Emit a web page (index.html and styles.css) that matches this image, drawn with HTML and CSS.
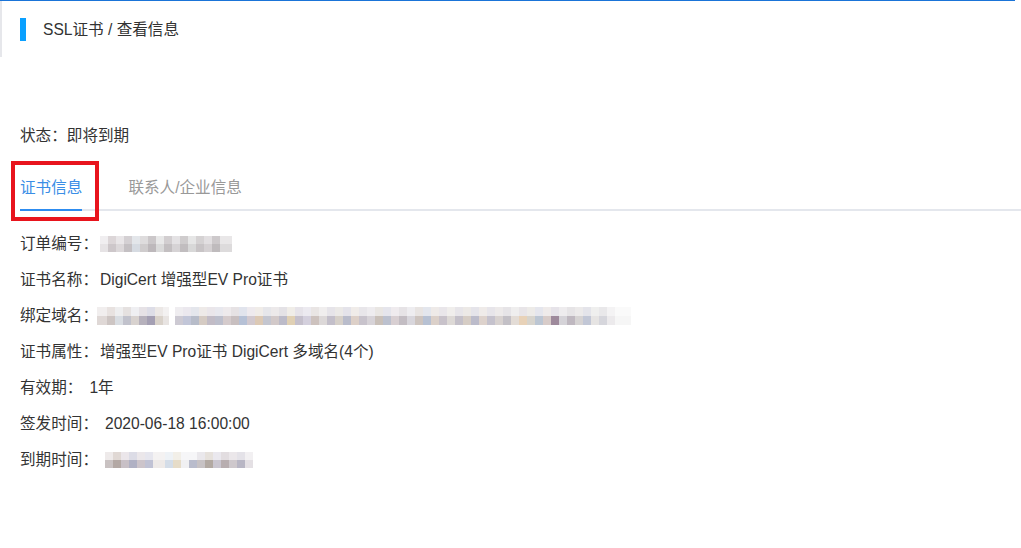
FILE: index.html
```html
<!DOCTYPE html>
<html lang="zh-CN">
<head>
<meta charset="utf-8">
<title>SSL证书 / 查看信息</title>
<link rel="stylesheet" href="styles.css">
</head>
<body>
<div class="topline"></div>
<header class="header">
  <span class="bar"></span>
  <span class="crumb">SSL证书 / 查看信息</span>
</header>
<main class="content">
  <div class="status">状态：即将到期</div>
  <nav class="tabs">
    <div class="tab active">证书信息<span class="highlight"></span></div>
    <div class="tab">联系人/企业信息</div>
  </nav>
  <ul class="info">
    <li><span class="label">订单编号：</span><span class="blur blur-order"></span></li>
    <li><span class="label">证书名称：</span><span class="value">DigiCert 增强型EV Pro证书</span></li>
    <li><span class="label">绑定域名：</span><span class="blur blur-domain"></span></li>
    <li><span class="label">证书属性：</span><span class="value">增强型EV Pro证书 DigiCert 多域名(4个)</span></li>
    <li><span class="label">有效期：</span><span class="value gap">1年</span></li>
    <li><span class="label">签发时间：</span><span class="value gap">2020-06-18 16:00:00</span></li>
    <li><span class="label">到期时间：</span><span class="blur blur-expire"></span></li>
  </ul>
</main>
</body>
</html>
```

FILE: styles.css
```css
html, body {
  margin: 0;
  padding: 0;
  background: #fff;
}
body {
  font-family: "Liberation Sans", "Noto Sans CJK SC", sans-serif;
  font-size: 15.6px;
  color: #333;
}
.topline {
  height: 1px;
  width: 1015px;
  background: #1a74d8;
}
.header {
  height: 56px;
  border-left: 2px solid #e6e7eb;
  display: flex;
  align-items: center;
  padding-left: 18px;
}
.bar {
  width: 6px;
  height: 23px;
  background: #0aa0ff;
  margin-right: 17px;
}
.crumb {
  line-height: 20px;
  color: #333;
  padding-top: 1px;
}
.content {
  padding-left: 20px;
}
.status {
  margin-top: 69px;
  line-height: 20px;
}
.tabs {
  margin-top: 20px;
  display: flex;
  border-bottom: 2px solid #e4e7ed;
}
.tab {
  position: relative;
  padding: 12px 0 11px;
  line-height: 20px;
  margin-bottom: -2px;
  border-bottom: 2px solid transparent;
  color: #999;
}
.tab + .tab {
  margin-left: 46px;
}
.tab.active {
  color: #3a8ee6;
  border-bottom-color: #2d8cf0;
}
.highlight {
  position: absolute;
  left: -9px;
  top: -5px;
  width: 88px;
  height: 60px;
  box-sizing: border-box;
  border: 4px solid #e8141d;
}
.info {
  list-style: none;
  margin: 15px 0 0;
  padding: 0;
}
.info li {
  display: flex;
  align-items: center;
  padding: 8px 0;
  line-height: 20px;
  height: 20px;
}
.label {
  color: #333;
}
.value {
  margin-left: 2px;
}
.value.gap {
  margin-left: 7px;
}
.blur {
  display: inline-block;
  filter: blur(0.6px);
  background-repeat: no-repeat;
}
.blur-order {
  width: 132px;
  height: 16px;
  margin-left: 2px;
  background-image:
    linear-gradient(to right, #f0eef0 0 8px, #dcd6d8 8px 16px, #e9e6e8 16px 24px, #d4d0d3 24px 32px, #e3e6ea 32px 40px, #dedcdd 40px 48px, #cbc7c9 48px 56px, #e8e8e8 56px 64px, #d2ced0 64px 72px, #e4e2e4 72px 80px, #cfcccd 80px 88px, #e6e6e6 88px 96px, #d5d2d3 96px 104px, #e2dfe1 104px 112px, #cdc9cb 112px 120px, #e9e7e8 120px 132px),
    linear-gradient(to right, #e6e3e5 0 8px, #cdc7ca 8px 16px, #dcd8da 16px 24px, #c4c0c3 24px 32px, #d6dbe2 32px 40px, #cfcccd 40px 48px, #bdb8bb 48px 56px, #dadada 56px 64px, #c3bfc1 64px 72px, #d6d3d5 72px 80px, #c1bdbf 80px 88px, #d8d8d8 88px 96px, #c8c4c6 96px 104px, #d5d1d3 104px 112px, #bfbbbd 112px 120px, #dddbdc 120px 132px);
  background-size: 132px 8px, 132px 8px;
  background-position: 0 0, 0 8px;
}
.blur-domain {
  width: 534px;
  height: 18px;
  margin-left: -1px;
  background-image:
    linear-gradient(to right, #f1eeee 0 10px, #e8e2e0 10px 18px, #eeeeef 18px 26px, #e5e1e0 26px 34px, #efeff2 34px 42px, #e6e2e6 42px 50px, #dddde7 50px 58px, #ece8e6 58px 66px, #f3f1f1 66px 72px, #fff 72px 78px, #efedf0 78px 86px, #ebe8ee 86px 94px, #e4e6ec 94px 102px, #eeeae8 102px 110px, #eae6ea 110px 118px, #e8e8ee 118px 126px, #eeeaec 126px 134px, #e6e2e4 134px 142px, #e1e4ed 142px 150px, #eeeaee 150px 158px, #f0ece8 158px 166px, #e6e6ea 166px 174px, #ece9ea 174px 182px, #e4e2e6 182px 190px, #f0ede8 190px 198px, #e6e3e9 198px 206px, #eceaf0 206px 214px, #e9e5e4 214px 222px, #f0eeee 222px 230px, #e6e4e9 230px 238px, #ebe9e7 238px 246px, #e4e3ea 246px 254px, #f0ece9 254px 262px, #e8e6ea 262px 270px, #eeecef 270px 278px, #e9e6e3 278px 286px, #e5e5ec 286px 294px, #efebee 294px 302px, #e6e3e6 302px 310px, #eeedf0 310px 318px, #e8e4e2 318px 326px, #e3e6ed 326px 334px, #eeeae8 334px 342px, #e9e6ea 342px 350px, #f0eeec 350px 358px, #e7e5e9 358px 366px, #ece9e6 366px 374px, #e5e4ea 374px 382px, #efebe9 382px 390px, #e7e5ea 390px 398px, #edeaea 398px 406px, #e6e4e7 406px 414px, #efeeee 414px 422px, #e8e5e8 422px 430px, #edebe8 430px 438px, #e5e6ed 438px 446px, #efebea 446px 454px, #e6e3e9 454px 462px, #eeecee 462px 470px, #e6e4e6 470px 478px, #eceaea 478px 486px, #e4e4ea 486px 494px, #efefee 494px 502px, #e9e8ea 502px 510px, #f4f3f4 510px 518px, #fafafa 518px 534px),
    linear-gradient(to right, #dfd8d6 0 10px, #cdc5c3 10px 18px, #d9dde2 18px 26px, #c1c2cc 26px 34px, #d8d2cf 34px 42px, #b6b1bc 42px 50px, #a49fb3 50px 58px, #d9d2ca 58px 66px, #e8e4e2 66px 72px, #fff 72px 78px, #cdcad3 78px 86px, #c2c6d8 86px 94px, #b7bcc9 94px 102px, #d5cbc3 102px 110px, #c2bcc6 110px 118px, #bdbfcc 118px 126px, #d5cbcc 126px 134px, #c8bfc0 134px 142px, #b6c1d6 142px 150px, #d2c9cf 150px 158px, #dcc9b5 158px 166px, #c4c6d0 166px 174px, #d2c9c9 174px 182px, #bcbbc9 182px 190px, #e0d0b4 190px 198px, #c5c0cc 198px 206px, #d4d0dd 206px 214px, #cdc2be 214px 222px, #dcd8d8 222px 230px, #c3bfca 230px 238px, #d6d0c9 238px 246px, #b9bccb 246px 254px, #ddd0c8 254px 262px, #c8c3cc 262px 270px, #d7d3d8 270px 278px, #c9c0b9 278px 286px, #bcc1cf 286px 294px, #d8cfd2 294px 302px, #c3bdc3 302px 310px, #d8d6dc 310px 318px, #cdc4bf 318px 326px, #b7c1d3 326px 334px, #dbd0c9 334px 342px, #c8c2ca 342px 350px, #ddd9d6 350px 358px, #c4c0c9 358px 366px, #d6cdc5 366px 374px, #bcbccb 374px 382px, #ddd2cc 382px 390px, #c5c2cd 390px 398px, #d8d2d0 398px 406px, #c3c0c6 406px 414px, #e3dcd6 414px 422px, #e8d2b8 422px 430px, #d7d4cd 430px 438px, #bcc6d3 438px 446px, #d8ccc9 446px 454px, #9e8a9c 454px 462px, #d5d3d8 462px 470px, #bfb8c0 470px 478px, #d6d3d3 478px 486px, #c2c7d6 486px 494px, #e6e4e3 494px 502px, #d6d6dc 502px 510px, #eceaec 510px 518px, #f6f6f6 518px 534px);
  background-size: 534px 9px, 534px 9px;
  background-position: 0 0, 0 9px;
}
.blur-expire {
  width: 152px;
  height: 16px;
  margin-left: 3px;
  background-image:
    linear-gradient(to right, #fff 0 4px, #eeeaea 4px 12px, #e0d8d4 12px 20px, #ebe6ea 20px 28px, #dcdce6 28px 36px, #ebe7ea 36px 44px, #e6e6ee 44px 52px, #f4f2f2 52px 64px, #eef2f6 64px 72px, #f2efe8 72px 80px, #f6f6f8 80px 96px, #eae8ec 96px 104px, #e6e1dc 104px 112px, #eae8ee 112px 120px, #e2dde0 120px 128px, #ebe7ea 128px 136px, #e4e2e8 136px 144px, #f2f0f2 144px 152px),
    linear-gradient(to right, #fff 0 4px, #c9c2c2 4px 12px, #b3a8a4 12px 20px, #c8c0c6 20px 28px, #b0b1c4 28px 36px, #ccc4ca 36px 44px, #c0c2d4 44px 52px, #eeeae8 52px 64px, #d4dde8 64px 72px, #e6dcc8 72px 80px, #f0f0f2 80px 88px, #b9bccc 88px 96px, #c7c2c4 96px 104px, #b2a9a2 104px 112px, #cac6d0 112px 120px, #b8aeb0 120px 128px, #cec8cc 128px 136px, #b8b6c4 136px 144px, #e4e0e4 144px 152px);
  background-size: 152px 8px, 152px 8px;
  background-position: 0 0, 0 8px;
}
```
